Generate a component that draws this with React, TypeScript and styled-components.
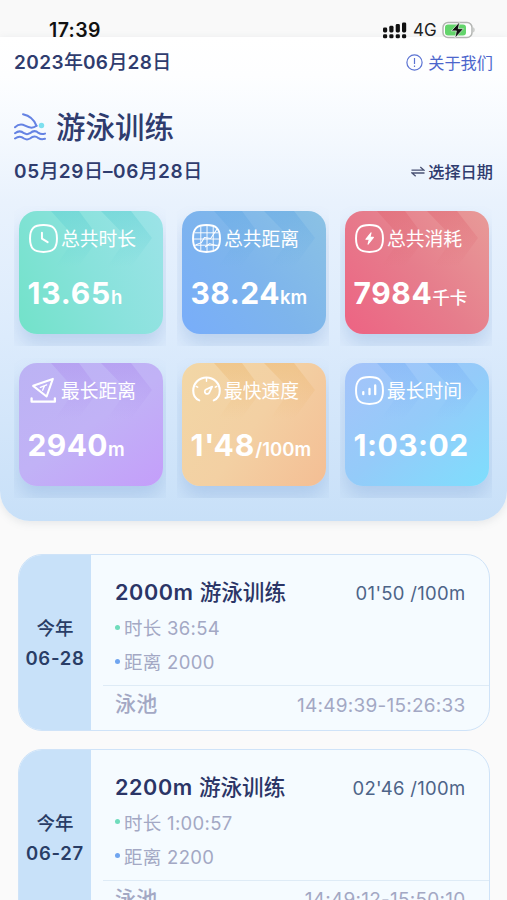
import React from "react";
import styled, { createGlobalStyle } from "styled-components";

const Global = createGlobalStyle`
  * { box-sizing: border-box; }
  body {
    margin: 0;
    background: #fafafa;
    font-family: Inter, "Noto Sans CJK SC", sans-serif;
    color: #2f3c6e;
    overflow: hidden;
  }
  svg { display: block; flex: none; }
`;

const Screen = styled.main`
  width: 507px;
  height: 900px;
  overflow: hidden;
  background: #fafafa;
`;

const StatusBar = styled.div`
  height: 37px;
  padding: 20px 32px 0 49px;
  display: flex;
  justify-content: space-between;
  background: #f9f9f9;
`;

const Clock = styled.div`
  font-size: 19.5px;
  line-height: 20px;
  font-weight: 600;
  letter-spacing: 0.4px;
  color: #111;
`;

const StatusIcons = styled.div`
  display: flex;
  align-items: center;
  height: 20px;
  font-size: 17px;
  line-height: 20px;
  font-weight: 400;
  color: #222;
`;

const Network = styled.span`
  width: 22px;
  margin: 0 7px 0 6px;
`;

const Panel = styled.section`
  height: 484px;
  padding: 13px 14px 0;
  border-radius: 0 0 30px 30px;
  background: linear-gradient(180deg, #ffffff 0%, #fdfeff 8%, #f3f8fe 22%, #e9f2fd 34%, #dcebfc 62%, #c8e0f8 100%);
  box-shadow: 0 2px 8px rgba(120, 130, 140, 0.16);
`;

const Row = styled.div<{ $h: number; $mt?: number }>`
  display: flex;
  align-items: center;
  justify-content: space-between;
  height: ${(p) => p.$h}px;
  margin-top: ${(p) => p.$mt ?? 0}px;
`;

const DateText = styled.div<{ $spacing: number }>`
  font-size: 19px;
  line-height: 26px;
  font-weight: 600;
  letter-spacing: ${(p) => p.$spacing}px;
  white-space: nowrap;
`;

const Han = styled.span`
  font-weight: 500;
  letter-spacing: 0;
`;

const Link = styled.div<{ $strong?: boolean }>`
  display: flex;
  align-items: center;
  gap: ${(p) => (p.$strong ? 3 : 5)}px;
  font-size: 16.2px;
  line-height: 24px;
  font-weight: ${(p) => (p.$strong ? 500 : 400)};
  color: ${(p) => (p.$strong ? "#2f3c6e" : "#4c66cc")};
`;

const Title = styled.h1`
  display: flex;
  align-items: center;
  gap: 10px;
  margin: 0;
  font-size: 29.5px;
  line-height: 36px;
  font-weight: 500;
`;

const Stats = styled.div`
  display: grid;
  grid-template-columns: repeat(3, 152px);
  grid-auto-rows: 140px;
  justify-content: space-between;
  row-gap: 12px;
  margin: 21px 1px 0 0;
`;

const StatCell = styled.div`
  overflow: hidden;
  padding: 5px 4px 0 5px;
`;

const StatCard = styled.article<{ $fill: string }>`
  position: relative;
  width: 144px;
  height: 123px;
  padding: 12px 0 0 10px;
  border-radius: 18px;
  color: #fff;
  background: ${(p) => p.$fill};
  box-shadow: 0 11px 18px rgba(96, 140, 200, 0.26);
`;

const Chevrons = styled.svg`
  position: absolute;
  inset: 0;
`;

const StatHead = styled.div`
  position: relative;
  display: flex;
  align-items: center;
  gap: 3px;
  height: 30px;
  white-space: nowrap;
`;

const StatLabel = styled.span`
  padding-top: 3px;
  font-size: 18.8px;
  line-height: 30px;
`;

const Value = styled.div<{ $spacing: number }>`
  position: relative;
  margin: 20px 0 0 -1.5px;
  font-size: 30px;
  line-height: 40px;
  font-weight: 700;
  letter-spacing: ${(p) => p.$spacing}px;
  white-space: nowrap;
`;

const Unit = styled.span<{ $cjk?: boolean }>`
  font-size: ${(p) => (p.$cjk ? 17.5 : 18.5)}px;
  font-weight: ${(p) => (p.$cjk ? 500 : 600)};
  letter-spacing: 0;
`;

const List = styled.section`
  display: grid;
  gap: 18px;
  padding: 33px 17.5px 0 18px;
`;

const Session = styled.article`
  display: flex;
  height: 176.6px;
  overflow: hidden;
  border: 1.5px solid #cfe3f8;
  border-radius: 24px;
  background: #f5fbff;
`;

const Day = styled.div`
  flex: none;
  width: 72px;
  padding-top: 58px;
  background: #c8e1f9;
  text-align: center;
  font-size: 18.5px;
  line-height: 30px;
  font-weight: 500;
  color: #293d66;
`;

const DayNumber = styled.div`
  font-weight: 600;
  font-size: 18.5px;
  letter-spacing: 0.7px;
  white-space: nowrap;
`;

const Details = styled.div`
  flex: 1;
  display: flex;
  flex-direction: column;
  padding: 23px 0 0 12px;
`;

const Headline = styled.div`
  display: flex;
  justify-content: space-between;
  padding: 0 23px 0 12px;
  line-height: 28px;
`;

const Name = styled.h2`
  margin: 0;
  font-size: 21.6px;
  font-weight: 600;
  letter-spacing: 0.6px;
  color: #2b3566;
  white-space: pre;
`;

const Pace = styled.div`
  padding-top: 1px;
  font-size: 18.5px;
  letter-spacing: 0.3px;
  color: #4d6488;
`;

const Fact = styled.div<{ $dot: string }>`
  display: flex;
  align-items: center;
  gap: 5px;
  height: 34px;
  padding-left: 12px;
  font-size: 18.5px;
  letter-spacing: 0.3px;
  color: #a3a8c4;
  &::before {
    content: "";
    width: 5px;
    height: 5px;
    margin-right: -1px;
    border-radius: 50%;
    background: ${(p) => p.$dot};
  }
`;

const Facts = styled.div`
  padding-top: 3px;
  height: 78px;
`;

const Foot = styled.div`
  display: flex;
  align-items: center;
  justify-content: space-between;
  height: 40px;
  padding: 0 23px 0 12px;
  border-top: 1.5px solid #deebf6;
  font-size: 19px;
  line-height: 28px;
  letter-spacing: 0.25px;
  color: #a3a8c4;
`;

const Place = styled.span`
  margin-top: -3px;
  font-size: 21px;
  font-weight: 500;
`;

const Mixed = ({ text }: { text: string }) => (
  <>
    {text.split(/([\u4e00-\u9fff]+)/).map((part, i) => (i % 2 ? <Han key={i}>{part}</Han> : part))}
  </>
);

const SignalIcon = () => (
  <svg width="24" height="17" viewBox="0 0 24 17" fill="#111">
    {[0, 6.3, 12.7, 19].map((x, i) => (
      <g key={x}>
        <rect x={x} y={5.5 - i * 1.7} width="4.2" height={5 + i * 1.7} rx="1.4" />
        <rect x={x} y="12.3" width="4.2" height="4" rx="1.4" />
      </g>
    ))}
  </svg>
);

const BatteryIcon = () => (
  <svg width="33" height="18" viewBox="0 0 33 18">
    <rect x="1" y="1.5" width="29" height="15" rx="5" fill="#fff" stroke="#b3b5b2" strokeWidth="1.5" />
    <path d="M31.4 6.3v5.2c1.5-.8 1.5-4.4 0-5.2z" fill="#b3b5b2" />
    <rect x="3" y="3.5" width="21" height="11" rx="3" fill="#63d46b" />
    <path d="M17.7.8 9.3 9.9h5.1l-1.5 7.3 8.6-9.5h-5.2z" fill="#111" stroke="#e9f7e8" strokeWidth=".7" />
  </svg>
);

const SwimIcon = () => (
  <svg width="32" height="28" viewBox="0 0 32 28" fill="none" stroke="#6583e3" strokeWidth="2" strokeLinecap="round">
    <path d="M9 1.200C15 2.500 20 6 22.500 12.800" />
    <path d="M1 14.300C4 11.500 7.500 10.800 11 12.700c4 2.200 8 3 11.500.1" />
    <path d="M1 20.200c3.500-2.600 6-2.600 9 0 2 1.300 4 1.300 6 0 3-2.600 6-2.600 8.500-.3 2 1.500 4 1.500 6.500.7" />
    <path d="M1 25.500c3.500-2.600 6-2.600 9 0 2 1.200 4 1.200 6 0 3-2.600 6-2.600 8.500-.3 2 1.300 4 1.300 6.500.6" />
    <circle cx="27.500" cy="12.500" r="2.700" fill="#7de0ef" stroke="none" />
  </svg>
);

const AboutIcon = () => (
  <svg width="17" height="19" viewBox="0 0 17 19" fill="none" stroke="#5b73d2" strokeWidth="1.200">
    <circle cx="8.500" cy="8.500" r="7.600" />
    <path d="M8.500 4v6M8.500 11.400v1.500" />
  </svg>
);

const SwapIcon = () => (
  <svg width="14" height="12" viewBox="0 0 14 12" fill="none" stroke="#4a5274" strokeWidth="1.300">
    <path d="M.5 4.200h12.500L9.300 1M13.500 7H1l3.700 3.200" />
  </svg>
);

const Squircle = () => (
  <path d="M14 1C23.500 1 27 4.500 27 14S23.500 27 14 27 1 23.500 1 14 4.500 1 14 1z" strokeWidth="1.900" />
);

type IconKind = "clock" | "map" | "bolt" | "send" | "gauge" | "bars";

const glyphs: Record<IconKind, React.ReactNode> = {
  clock: (
    <>
      <Squircle />
      <path d="M12.500 8.500v5.700l5.500 3.300" strokeWidth="1.900" />
    </>
  ),
  map: (
    <>
      <Squircle />
      <path d="M3 8.500h22M2 14.500h24M3 20.500h22M8.500 3v22M14.500 2v24M20.500 3v22" strokeWidth=".9" />
      <path d="M4 20l5-2 3-5 6 1 6-9M13 22l4-3 7 2" strokeWidth="1" />
    </>
  ),
  bolt: (
    <>
      <Squircle />
      <path d="M15.500 8.500 10.500 14.800h3.300L12.600 19.500 17.800 12.900h-3.400z" fill="#fff" strokeWidth="1" />
    </>
  ),
  send: (
    <>
      <path d="M4 9.500 23 2.800 17 19.800z" strokeWidth="2" />
      <path d="M11 11l6-2.500M13.200 13.800l1.800-4.500" strokeWidth="1.300" />
      <path d="M2.500 21.500v3.300h22.500v-3.300" strokeWidth="2.200" />
    </>
  ),
  gauge: (
    <>
      <path d="M7 23.500C3.500 22 1.200 18.500 1.200 14.200a12.800 12.800 0 0 1 25.600 0c0 4.300-2.300 7.800-5.800 9.300" strokeWidth="2" />
      <path d="M14 2v3M4 10l1.500.8M24 10l-1.500.8" strokeWidth="1.400" />
      <path d="M19.500 10.300 16.700 16a2.300 2.300 0 1 1-3.200-3z" strokeWidth="1.700" />
    </>
  ),
  bars: (
    <>
      <Squircle />
      <path d="M8 15.500v2M14 12.500v5M19.500 9v8.500" strokeWidth="2.200" />
    </>
  ),
};

const StatIcon = ({ kind }: { kind: IconKind }) => (
  <svg width="29" height="29" viewBox="0 0 28 28" fill="none" stroke="#fff" strokeLinecap="round" strokeLinejoin="round">
    {glyphs[kind]}
  </svg>
);

interface Stat {
  kind: IconKind;
  label: string;
  value: string;
  unit?: string;
  cjk?: boolean;
  spacing: number;
  fill: string;
  shade: string;
}

const stats: Stat[] = [
  { kind: "clock", label: "总共时长", value: "13.65", unit: "h", spacing: 0.8, fill: "linear-gradient(65deg, #72e2c9, #88e2db 50%, #9ce3e8)", shade: "#54cbd0" },
  { kind: "map", label: "总共距离", value: "38.24", unit: "km", spacing: 0.5, fill: "linear-gradient(50deg, #78adfa, #7eb5ec 50%, #8bc2e4)", shade: "#5da5e4" },
  { kind: "bolt", label: "总共消耗", value: "7984", unit: "千卡", cjk: true, spacing: 0.6, fill: "linear-gradient(50deg, #ed6383, #e67d8c 50%, #e89b98)", shade: "#de5f6c" },
  { kind: "send", label: "最长距离", value: "2940", unit: "m", spacing: 0.4, fill: "linear-gradient(145deg, #bcb3f4, #c1b2f6 50%, #c49efa)", shade: "#aa88ed" },
  { kind: "gauge", label: "最快速度", value: "1'48", unit: "/100m", spacing: 0.9, fill: "linear-gradient(125deg, #f2d7a6, #f3d0a3 50%, #f4be94)", shade: "#eab164" },
  { kind: "bars", label: "最长时间", value: "1:03:02", spacing: 0.5, fill: "linear-gradient(140deg, #a5c3fa, #94cbf9 50%, #7edefd)", shade: "#74aff5" },
];

const StatTile = ({ stat }: { stat: Stat }) => (
  <StatCell>
    <StatCard $fill={stat.fill}>
      <Chevrons width="144" height="123" viewBox="0 0 144 123">
        <defs>
          <linearGradient id={`shade-${stat.kind}`} x1="0" y1="0" x2="0" y2="56" gradientUnits="userSpaceOnUse">
            <stop offset="0" stopColor={stat.shade} stopOpacity=".38" />
            <stop offset="1" stopColor={stat.shade} stopOpacity="0" />
          </linearGradient>
        </defs>
        <g fill={`url(#shade-${stat.kind})`}>
          <path d="M32 0h28l20 27-21 29H36l20-29z" />
          <path d="M82 0h30l21 27-21 29H88l20-29z" />
        </g>
      </Chevrons>
      <StatHead>
        <StatIcon kind={stat.kind} />
        <StatLabel>{stat.label}</StatLabel>
      </StatHead>
      <Value $spacing={stat.spacing}>
        {stat.value}
        {stat.unit && <Unit $cjk={stat.cjk}>{stat.unit}</Unit>}
      </Value>
    </StatCard>
  </StatCell>
);

const sessions = [
  { day: "06-28", name: "2000m 游泳训练", pace: "01'50 /100m", time: "36:54", distance: "2000", span: "14:49:39-15:26:33" },
  { day: "06-27", name: "2200m 游泳训练", pace: "02'46 /100m", time: "1:00:57", distance: "2200", span: "14:49:12-15:50:10" },
];

export default function App() {
  return (
    <Screen>
      <Global />
      <StatusBar>
        <Clock>17:39</Clock>
        <StatusIcons>
          <SignalIcon />
          <Network>4G</Network>
          <BatteryIcon />
        </StatusIcons>
      </StatusBar>
      <Panel>
        <Row $h={26}>
          <DateText $spacing={0.4}>
            <Mixed text="2023年06月28日" />
          </DateText>
          <Link>
            <AboutIcon />
            关于我们
          </Link>
        </Row>
        <Row $h={36} $mt={33}>
          <Title>
            <SwimIcon />
            游泳训练
          </Title>
        </Row>
        <Row $h={26} $mt={14}>
          <DateText $spacing={0.6}>
            <Mixed text="05月29日–06月28日" />
          </DateText>
          <Link $strong>
            <SwapIcon />
            选择日期
          </Link>
        </Row>
        <Stats>
          {stats.map((s) => (
            <StatTile key={s.kind} stat={s} />
          ))}
        </Stats>
      </Panel>
      <List>
        {sessions.map((s) => (
          <Session key={s.day}>
            <Day>
              今年
              <DayNumber>{s.day}</DayNumber>
            </Day>
            <Details>
              <Headline>
                <Name>
                  <Mixed text={s.name} />
                </Name>
                <Pace>{s.pace}</Pace>
              </Headline>
              <Facts>
                <Fact $dot="#6fdcbc">时长 {s.time}</Fact>
                <Fact $dot="#6fa5f0">距离 {s.distance}</Fact>
              </Facts>
              <Foot>
                <Place>泳池</Place>
                <span>{s.span}</span>
              </Foot>
            </Details>
          </Session>
        ))}
      </List>
    </Screen>
  );
}
